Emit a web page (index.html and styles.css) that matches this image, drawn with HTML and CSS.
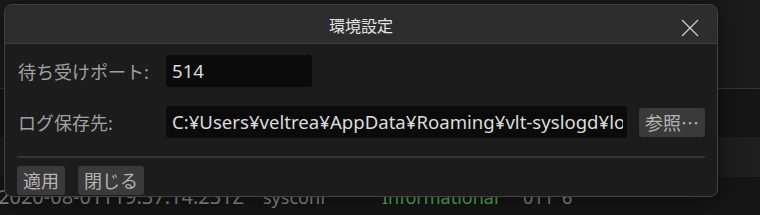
FILE: index.html
```html
<!DOCTYPE html>
<html lang="ja">
<head>
    <meta charset="UTF-8">
    <title>環境設定</title>
    <link rel="stylesheet" href="styles.css">
</head>
<body>

    <div class="app">
        <div class="app-head"></div>
        <div class="log-row"></div>
        <div class="log-row alt"></div>
        <div class="log-row last">
            <span class="col-time">2020-08-01T19:37:14.231Z</span>
            <span class="col-host">sysconf</span>
            <span class="col-level">Informational</span>
            <span class="col-fac">011</span>
            <span class="col-sev">6</span>
        </div>
    </div>

    <div class="dialog">
        <div class="dialog-title">
            <span>環境設定</span>
            <button class="close-btn" aria-label="close">
                <svg width="18" height="18" viewBox="0 0 18 18">
                    <path d="M1 1 L17 17 M17 1 L1 17" stroke="#cfcfcf" stroke-width="1.2" fill="none"/>
                </svg>
            </button>
        </div>
        <div class="dialog-body">
            <div class="form">
                <label>待ち受けポート:</label>
                <div class="field"><div class="input short"><span>514</span></div></div>

                <label>ログ保存先:</label>
                <div class="field">
                    <div class="input"><span>C:¥Users¥veltrea¥AppData¥Roaming¥vlt-syslogd¥logs</span></div>
                    <button class="btn">参照…</button>
                </div>
            </div>
            <hr class="sep">
            <div class="actions">
                <button class="btn">適用</button>
                <button class="btn">閉じる</button>
            </div>
        </div>
    </div>

</body>
</html>
```

FILE: styles.css
```css
body {
    margin: 0;
    width: 760px;
    height: 215px;
    overflow: hidden;
    position: relative;
    background: #151515;
    font-family: "Noto Sans", "Noto Sans CJK JP", sans-serif;
    color: #a8a8a8;
}

.app {
    display: flex;
    flex-direction: column;
}

.app-head {
    height: 88px;
    background: #1b1b1b;
    border-bottom: 1px solid #363636;
}

.log-row {
    height: 48px;
    display: flex;
    align-items: flex-start;
    font-size: 18px;
    line-height: 20px;
    color: #858585;
    white-space: nowrap;
}

.log-row.alt {
    height: 40px;
    background: #1e1e1e;
}

.log-row.last {
    height: 28px;
    padding-top: 10px;
}

.col-time { margin-left: -2px; width: 265px; font-size: 20px; }
.col-host { width: 119px; }
.col-level { width: 141px; color: #4fa84f; }
.col-fac { width: 39px; }

.dialog {
    position: absolute;
    left: 4px;
    top: 4px;
    width: 712px;
    height: 191px;
    background: #1c1c1c;
    border: 1px solid #424242;
    border-radius: 8px;
    overflow: hidden;
    box-shadow: 0 0 24px rgba(0, 0, 0, 0.5);
}

.dialog-title {
    height: 37px;
    background: #2d2d2d;
    border-bottom: 1px solid #3e3e3e;
    display: flex;
    align-items: center;
    justify-content: center;
    position: relative;
    padding-top: 1px;
    font-size: 16px;
    color: #e4e4e4;
}

.close-btn {
    position: absolute;
    right: 18px;
    top: 14px;
    padding: 0;
    border: none;
    background: transparent;
    line-height: 0;
}

.dialog-body {
    padding: 11px 12px 0 12px;
}

.form {
    display: grid;
    grid-template-columns: 149px 1fr;
    row-gap: 19px;
    align-items: center;
}

.form label {
    font-size: 18px;
    padding-left: 1px;
    color: #a0a0a0;
}

.field {
    display: flex;
    align-items: center;
    gap: 12px;
    min-width: 0;
}

.input {
    flex: 1;
    min-width: 0;
    height: 32px;
    line-height: 32px;
    padding: 0 4px 0 6px;
    background: #0b0b0b;
    border-radius: 3px;
    color: #dcdcdc;
    font-size: 18.6px;
    white-space: nowrap;
}

.input span {
    display: block;
    overflow: hidden;
}

.input.short {
    flex: none;
    width: 136px;
}

.btn {
    font-family: "Noto Sans CJK JP", sans-serif;
    font-size: 18px;
    color: #b4b4b4;
    background: #3a3a3a;
    border: none;
    border-radius: 3px;
    height: 29px;
    padding: 0 6px;
    line-height: 29px;
    flex: none;
}

.sep {
    margin: 18px 0 8px 0;
    border: none;
    border-top: 2px solid #353535;
}

.actions {
    display: flex;
    gap: 13px;
}
```
